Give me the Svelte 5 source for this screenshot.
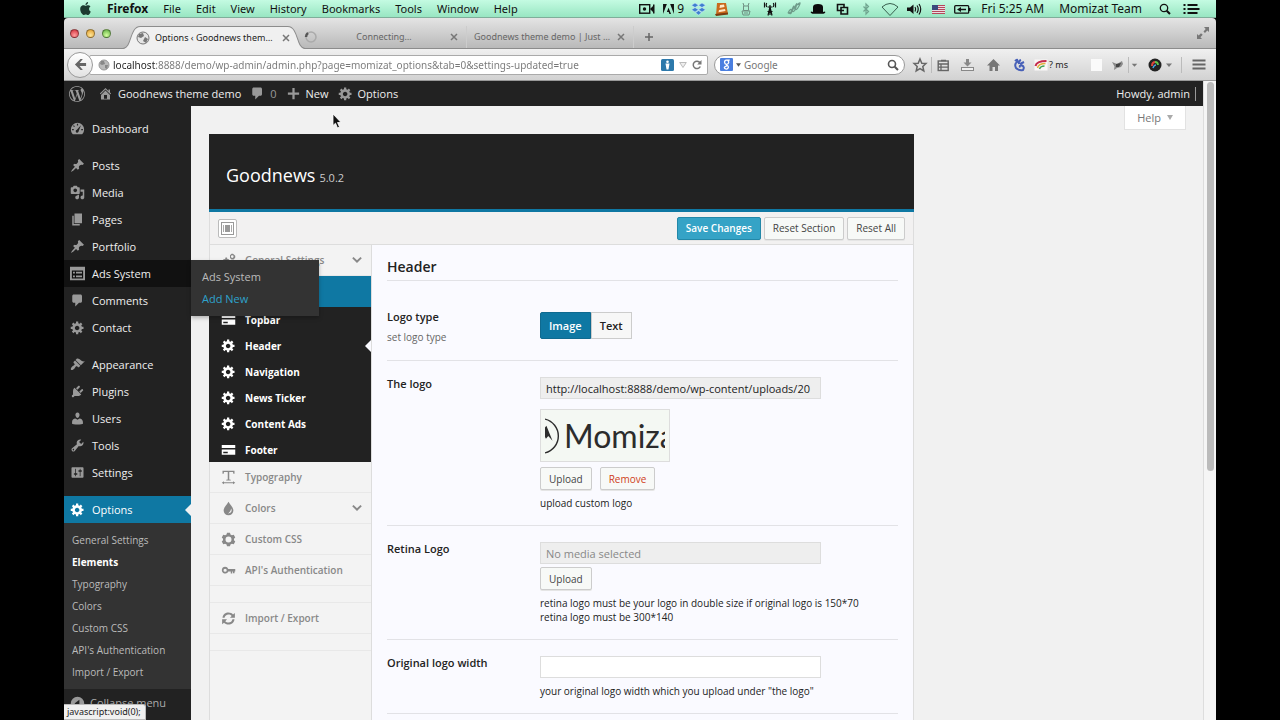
<script>
  const paths = {
    pin: 'M10.44 3.02l1.82-1.82 6.36 6.35-1.83 1.82c-1.05-.68-2.48-.57-3.41.36l-.75.75c-.92.93-1.04 2.35-.35 3.41l-1.83 1.82-2.41-2.41-2.8 2.79c-.42.42-3.38 2.71-3.8 2.29s1.86-3.39 2.28-3.81l2.79-2.79L4.1 9.36l1.83-1.82c1.05.69 2.48.57 3.4-.36l.75-.75c.93-.92 1.05-2.35.36-3.41z',
    media: 'M13 11V4c0-.55-.45-1-1-1h-1.67L9 1H5L3.67 3H2c-.55 0-1 .45-1 1v7c0 .55.45 1 1 1h10c.55 0 1-.45 1-1zM7 4.5c1.38 0 2.5 1.12 2.5 2.5S8.38 9.5 7 9.5 4.5 8.38 4.5 7 5.62 4.5 7 4.5zM14 6h5v10.5c0 1.38-1.12 2.5-2.5 2.5S14 17.88 14 16.5s1.12-2.5 2.5-2.5c.17 0 .34.02.5.05V9h-3V6zm-4 8.05V13h2v3.5c0 1.38-1.12 2.5-2.5 2.5S7 17.88 7 16.5 8.12 14 9.5 14c.17 0 .34.02.5.05z',
    page: 'M6 15V2h10v13H6zm-1 1h8v2H3V5h2v11z',
    comment: 'M5 2h9c1.1 0 2 .9 2 2v7c0 1.1-.9 2-2 2h-2l-5 5v-5H5c-1.1 0-2-.9-2-2V4c0-1.1.9-2 2-2z',
    gear: 'M18 12h-2.18c-.17.7-.44 1.35-.81 1.93l1.54 1.54-2.1 2.1-1.54-1.54c-.58.36-1.23.63-1.91.79V19H8v-2.18c-.68-.16-1.33-.43-1.91-.79l-1.54 1.54-2.12-2.12 1.54-1.54c-.36-.58-.63-1.23-.79-1.91H1V9.03h2.17c.16-.7.44-1.35.8-1.94L2.43 5.55l2.1-2.1 1.54 1.54c.58-.37 1.24-.64 1.93-.81V2h3v2.18c.68.16 1.33.43 1.91.79l1.54-1.54 2.12 2.12-1.54 1.54c.36.59.64 1.24.8 1.94H18V12zm-8.5 1.5c1.66 0 3-1.34 3-3s-1.34-3-3-3-3 1.34-3 3 1.34 3 3 3z',
    brush: 'M14.48 11.06L7.41 3.99l1.5-1.5c.5-.56 2.3-.47 3.51.32 1.21.8 1.43 1.28 2.91 2.1 1.18.64 2.45 1.26 4.45.85zm-.71.71L6.7 4.7 4.93 6.47c-.39.39-.39 1.02 0 1.41l1.06 1.06c.39.39.39 1.03 0 1.42-.6.6-1.43 1.11-2.21 1.69-.35.26-.7.53-1.01.84C1.43 14.23.4 16.08 1.4 17.07c.99 1 2.84-.03 4.18-1.36.31-.31.58-.66.85-1.02.57-.78 1.08-1.61 1.69-2.21.39-.39 1.02-.39 1.41 0l1.06 1.06c.39.39 1.02.39 1.41 0z',
    plug: 'M13.11 4.36L9.87 7.6 8 5.73l3.24-3.24c.35-.34 1.05-.2 1.56.32.52.51.66 1.21.31 1.55zm-8 1.77l.91-1.12 9.01 9.01-1.19.84c-.71.71-2.63 1.16-3.82 1.16H6.14L4.9 17.26c-.59.59-1.54.59-2.12 0-.59-.58-.59-1.53 0-2.12l1.24-1.24v-3.88c0-1.13.4-3.19 1.09-3.89zm7.26 3.97l3.24-3.24c.34-.35 1.04-.21 1.55.31.52.51.66 1.21.31 1.55l-3.24 3.25z',
    user: 'M10 9.25c-2.27 0-2.73-3.44-2.73-3.44C7 4.02 7.82 2 9.97 2c2.16 0 2.98 2.02 2.71 3.81 0 0-.41 3.44-2.68 3.44zm0 2.57L12.72 10c2.39 0 4.52 2.33 4.52 4.53v2.49s-3.65 1.13-7.24 1.13c-3.65 0-7.24-1.13-7.24-1.13v-2.49c0-2.25 1.94-4.48 4.47-4.48z',
    wrench: 'M16.68 9.77c-1.34 1.34-3.3 1.67-4.95.99l-5.41 6.52c-.99.99-2.59.99-3.58 0s-.99-2.59 0-3.57l6.52-5.42c-.68-1.65-.35-3.61.99-4.95 1.28-1.28 3.12-1.62 4.72-1.06l-2.89 2.89 2.82 2.82 2.86-2.87c.53 1.58.18 3.39-1.08 4.65zM3.81 16.21c.4.39 1.04.39 1.43 0 .4-.4.4-1.04 0-1.43-.39-.4-1.03-.4-1.43 0-.39.39-.39 1.03 0 1.43z',
    sliders: 'M18 16V4c0-.55-.45-1-1-1H3c-.55 0-1 .45-1 1v12c0 .55.45 1 1 1h14c.55 0 1-.45 1-1zM8 11h1c.55 0 1 .45 1 1s-.45 1-1 1H8v1.5c0 .28-.22.5-.5.5s-.5-.22-.5-.5V13H6c-.55 0-1-.45-1-1s.45-1 1-1h1V5.5c0-.28.22-.5.5-.5s.5.22.5.5V11zm5-2h-1c-.55 0-1-.45-1-1s.45-1 1-1h1V5.5c0-.28.22-.5.5-.5s.5.22.5.5V7h1c.55 0 1 .45 1 1s-.45 1-1 1h-1v5.5c0 .28-.22.5-.5.5s-.5-.22-.5-.5V9z',
    home: 'M16 8.5l1.53 1.53-1.06 1.06L10 4.6l-6.47 6.5-1.06-1.07L10 2.5l4 4v-2h2v4zm-6-2.46l6 5.99V18H4v-5.97zM12 17v-5H8v5h4z',
    dash: 'M3.8 17.5C2.200 16 1.200 13.700 1.200 11.200A8.800 8.800 0 0 1 18.800 11.200C18.800 13.700 17.800 16 16.200 17.500ZM9.200 3.800V6H10.800V3.800ZM5 5.600L4 6.600L5.500 8.100L6.500 7.100ZM2.800 10.600V12.200H5V10.600ZM15 10.600V12.200H17.200V10.600ZM14.600 5.800L9.200 11.600A2 2 0 1 0 11.600 13.400Z',
    ads: 'M0 1H20V19H0ZM2.500 6V16.500H17.500V6ZM4 7.500H6.500V10H4ZM8 7.500H16V10H8ZM4 12.500H6.500V15H4ZM8 12.500H16V15H8Z',
    card: 'M1 4H19V8H1ZM1 10H19V17H1ZM3 13V15H9V13Z',
    type: 'M2 1H18V5H16.500L16 2.800H11V12.500L13 13V14H7V13L9 12.500V2.800H4L3.500 5H2ZM1 17L4 15V16.300H16V15L19 17L16 19V17.700H4V19Z',
    drop: 'M10 1C12 5 16.500 8.500 16.500 12.800A6.500 6.300 0 0 1 3.500 12.800C3.500 8.500 8 5 10 1ZM13.500 10C13 13 12 14.500 9.500 16.500C13 16.800 15.500 13.500 13.500 10Z',
    nut: 'M8 1H12L12.600 3.300L14.500 4.300L17 3.800L19 7.200L17.300 9V11L19 12.800L17 16.200L14.500 15.700L12.600 16.700L12 19H8L7.400 16.700L5.500 15.700L3 16.200L1 12.800L2.700 11V9L1 7.200L3 3.800L5.500 4.300L7.400 3.300ZM10 6A4 4 0 1 0 10 14A4 4 0 1 0 10 6Z',
    key: 'M5.500 5A4.500 4.500 0 1 0 9.800 11.200H13V14H15V11.200H16V13.500H18V11.200H19V8H9.700A4.500 4.500 0 0 0 5.500 5ZM5.500 7.500A2 2 0 1 1 5.500 11.800A2 2 0 0 1 5.500 7.500Z',
    sync: 'M2 9C2.500 4.500 6 2 10 2C12.500 2 14.500 3 16 4.500L18.500 2.500V9H12L14.200 6.500C13 5.200 11.700 4.600 10 4.600C7.300 4.600 5.200 6.300 4.700 9ZM18 11C17.500 15.500 14 18 10 18C7.500 18 5.500 17 4 15.500L1.500 17.500V11H8L5.800 13.500C7 14.800 8.300 15.400 10 15.400C12.700 15.400 14.800 13.700 15.300 11Z',
    gears: 'M6 6H8L8.500 8L10.500 8.200L11.500 10L10.500 11.500L11.500 13.500L10 15.500L8.500 15.200L8 17H6L5.500 15.200L3.500 15.500L2 13.500L3 11.500L2 10L3.500 8.200L5.500 8ZM7 9.700A2 2 0 1 0 7 13.700A2 2 0 1 0 7 9.700ZM14 1H16L19 3.500V6L17 8.500H14L12 6.500V3ZM15 3A1.700 1.700 0 1 0 15 6.500A1.700 1.700 0 1 0 15 3Z',
    collapse: 'M10 1A9 9 0 1 0 10 19A9 9 0 1 0 10 1ZM12.500 5V15L6 10Z',
    plus: 'M8.500 2.500H11.500V8.500H17.500V11.500H11.500V17.500H8.500V11.500H2.500V8.500H8.500Z',
    chevron: 'M2 7L4.200 5L10 10.600L15.800 5L18 7L10 15Z'
  };

  const menuGroups = [
    [['Dashboard', 'dash']],
    [['Posts', 'pin'], ['Media', 'media'], ['Pages', 'page'], ['Portfolio', 'pin'], ['Ads System', 'ads'], ['Comments', 'comment'], ['Contact', 'gear']],
    [['Appearance', 'brush'], ['Plugins', 'plug'], ['Users', 'user'], ['Tools', 'wrench'], ['Settings', 'sliders']],
    [['Options', 'gear']]
  ];
  const optionLinks = ['General Settings', 'Elements', 'Typography', 'Colors', 'Custom CSS', "API's Authentication", 'Import / Export'];
  const macMenus = ['File', 'Edit', 'View', 'History', 'Bookmarks', 'Tools', 'Window', 'Help'];
  const elements = [['Topbar', 'card'], ['Header', 'gear'], ['Navigation', 'gear'], ['News Ticker', 'gear'], ['Content Ads', 'gear'], ['Footer', 'card']];
  const sections = [['Typography', 'type'], ['Colors', 'drop'], ['Custom CSS', 'nut'], ["API's Authentication", 'key']];

  let logoType = $state('Image');
  let logoUrl = $state('http://localhost:8888/demo/wp-content/uploads/20');
  let retinaUrl = $state('');
  let logoWidth = $state('');
  let address = $state('localhost:8888/demo/wp-admin/admin.php?page=momizat_options&tab=0&settings-updated=true');
</script>

{#snippet icon(name)}
  <svg class="icon" viewBox="0 0 20 20" aria-hidden="true"><path fill="currentColor" fill-rule="evenodd" d={paths[name]} /></svg>
{/snippet}

<div class="desktop">
  <div class="screen">
    <nav class="menubar" aria-label="Menu bar">
      <svg class="apple" viewBox="0 0 24 24" aria-hidden="true"><path fill="#1d3b30" d="M12.152 6.896c-.948 0-2.415-1.078-3.96-1.04-2.04.027-3.91 1.183-4.961 3.014-2.117 3.675-.546 9.103 1.519 12.09 1.013 1.454 2.208 3.09 3.792 3.039 1.52-.065 2.09-.987 3.935-.987 1.831 0 2.35.987 3.96.948 1.637-.026 2.676-1.48 3.676-2.948 1.156-1.688 1.636-3.325 1.662-3.415-.039-.013-3.182-1.221-3.22-4.857-.026-3.04 2.48-4.494 2.597-4.559-1.429-2.09-3.623-2.324-4.39-2.376-2-.156-3.675 1.09-4.61 1.09zM15.53 3.83c.843-1.012 1.4-2.427 1.245-3.83-1.207.052-2.662.805-3.532 1.818-.78.896-1.454 2.338-1.273 3.714 1.338.104 2.715-.688 3.559-1.701" /></svg>
      <b>Firefox</b>
      {#each macMenus as m}<span class="menu">{m}</span>{/each}
      <div class="status">
        <svg viewBox="0 0 24 16"><rect x="4.700" y="3.700" width="10" height="8.500" fill="none" stroke="#111" stroke-width="1.400" /><circle cx="9.500" cy="8" r="1.700" fill="#111" /><path d="M15 8L19 4V12ZM18 3.500H19.500V12.500H18Z" fill="#111" /></svg>
        <span class="adobe"><svg viewBox="0 0 12 11"><path fill="#111" d="M0 0H4.200L0 11ZM7.800 0H12V11ZM6 4L8.800 11H7L6.200 8.700H4.200Z" /></svg>9</span>
        <svg viewBox="0 0 24 16"><path fill="#3f7fd0" stroke="#d5ecff" stroke-width=".5" d="M9 2L12.500 4.300L9 6.500L5.500 4.300ZM16 2L19.500 4.300L16 6.500L12.500 4.300ZM9 6.500L12.500 8.800L9 11L5.500 8.800ZM16 6.500L19.500 8.800L16 11L12.500 8.800ZM12.500 9.600L15.500 11.800L12.500 14L9.500 11.800Z" /></svg>
        <svg viewBox="0 0 24 16"><path fill="#c96a1c" d="M7 2H16L18 13L6 14.500Z" /><path fill="#ffe8c8" d="M10 4L14 3.500L14.500 6L9.500 7ZM9 9L15 8L15.500 10L8.500 11.200Z" /><path fill="#7a3d10" d="M5 13L18 11.500V13.500L6 15Z" /></svg>
        <svg viewBox="0 0 24 16"><path fill="none" stroke="#6f8f82" d="M9 2L10 5M15 2L14 5M9.500 5H14.500V9.500H9.500ZM8 10H16L15 14H9ZM10 12H14" /></svg>
        <svg viewBox="0 0 24 16"><path fill="none" stroke="#111" stroke-width="1.200" d="M12 4V14M10 14.500L12 6L14 14.500M9.500 6H14.500M9.500 10.500H14.500M8.700 2Q7.500 4 8.700 6M6.500 1.500V6.500M15.300 2Q16.500 4 15.300 6M17.500 1.500V6.500" /></svg>
        <svg viewBox="0 0 24 16"><path fill="none" stroke="#6f9c8a" stroke-width="1.200" d="M6 12Q9 6 9.500 10T6 12Q10 12 11.500 7T9.500 9.500Q12 13 14 6T12.500 7Q14 11 17 5T15 4L17.500 3" /></svg>
        <svg viewBox="0 0 24 16"><path fill="#0b0b0b" d="M7 11V6Q7 3 12 3T17 6V11L19 10.500Q20 12 17.500 12.700H6.500Q4 12 5 10.500Z" /></svg>
        <svg viewBox="0 0 24 16"><path fill="none" stroke="#111" stroke-width="1.600" d="M11 9.500H7.500V3.500H14V7M11 6.500H17.500V13H11ZM11 6.500V9.500H14" /></svg>
        <svg viewBox="0 0 24 16"><path fill="none" stroke="#6fa48f" stroke-width="1.200" d="M9.500 5.500L14.500 10.500L12 13V3L14.500 5.500L9.500 10.500" /></svg>
        <svg viewBox="0 0 24 16"><path fill="none" stroke="#39604f" d="M4 6Q12 -1 20 6L12 14.500Z" /></svg>
        <svg viewBox="0 0 24 16"><path fill="#111" d="M5 6.500H8L11.500 3.500V13L8 10H5Z" /><path fill="none" stroke="#111" stroke-width="1.200" d="M13 6Q14.500 8 13 10.500M15 4.500Q17.500 8 15 12M17 3Q20.500 8 17 13.500" /></svg>
        <svg viewBox="0 0 24 16"><rect x="6" y="4" width="13" height="9" fill="#e8dfe3" /><path stroke="#b5485a" d="M6 4.500H19M6 6.500H19M6 8.500H19M6 10.500H19M6 12.500H19" /><rect x="6" y="4" width="6" height="5" fill="#3b4a7d" /></svg>
        <svg viewBox="0 0 24 16"><rect x="4.700" y="4.700" width="14" height="7.500" rx="1" fill="none" stroke="#111" stroke-width="1.300" /><path fill="#111" d="M19 7H20.500V10H19ZM7 8.500L11 6V7.700H16V9.300H11V11Z" /></svg>
      </div>
      <span>Fri 5:25 AM</span>
      <span>Momizat Team</span>
      <svg class="find" viewBox="0 0 12 12"><circle cx="5" cy="5" r="3.700" fill="none" stroke="#111" stroke-width="1.300" /><path d="M7.700 7.700L11 11" stroke="#111" stroke-width="2" /></svg>
      <svg class="lines" viewBox="0 0 16 12"><path stroke="#111" stroke-width="2" d="M0 2H2M4 2H14M0 6H2M4 6H16M0 10H2M4 10H14" /></svg>
    </nav>

    <div class="tabbar">
      <div class="lights"><i class="red"></i><i class="amber"></i><i class="green"></i></div>
      <div class="tab active">
        <svg class="shape" viewBox="0 0 180 23" preserveAspectRatio="none" aria-hidden="true"><path d="M0 23C9 22 6 1 17 .5H163C174 1 171 22 180 23Z" fill="#f0f0f0" /><path d="M0 22.500C9 22 6 1 17 .5H163C174 1 171 22 180 22.500" fill="none" stroke="#8c8c8c" /></svg>
        <svg class="fav" viewBox="0 0 14 14"><circle cx="7" cy="7" r="6" fill="#e5e5e5" stroke="#777" /><path fill="#777" d="M3 3L7 2L8 5L5 7L2 6ZM9 6L12 8L10 12L7 10Z" /></svg>
        <span>Options ‹ Goodnews them…</span>
        <button aria-label="Close tab"><svg viewBox="0 0 8 8"><path d="M1 1L7 7M7 1L1 7" stroke="#777" stroke-width="1.500" /></svg></button>
      </div>
      <div class="tab">
        <svg class="fav" viewBox="0 0 14 14"><circle cx="7" cy="7" r="5" fill="none" stroke="#aaa" stroke-width="1.500" /><path d="M2 7A5 5 0 0 1 4 3" fill="none" stroke="#555" stroke-width="2.500" /></svg>
        <span class="centered">Connecting…</span>
        <button aria-label="Close tab"><svg viewBox="0 0 8 8"><path d="M1 1L7 7M7 1L1 7" stroke="#777" stroke-width="1.500" /></svg></button>
      </div>
      <div class="tab ruled">
        <span>Goodnews theme demo | Just …</span>
        <button aria-label="Close tab"><svg viewBox="0 0 8 8"><path d="M1 1L7 7M7 1L1 7" stroke="#777" stroke-width="1.500" /></svg></button>
      </div>
      <button class="newtab" aria-label="New tab"><svg viewBox="0 0 10 10"><path d="M5 1V9M1 5H9" stroke="#666" stroke-width="1.500" /></svg></button>
      <svg class="expand" viewBox="0 0 12 12"><path fill="#777" d="M7 0H12V5L10.300 3.500L8 6L6.500 4.500L8.700 2ZM0 7L1.700 8.500L4 6.200L5.700 7.800L3.400 10.200L5 12H0Z" /></svg>
    </div>

    <div class="toolbar">
      <button class="back" aria-label="Back"><svg viewBox="0 0 14 14"><path fill="#666" d="M1 7L7 1H9.500L6 5.300H13V8.700H6L9.500 13H7Z" /></svg></button>
      <div class="url">
        <svg class="globe" viewBox="0 0 12 12"><circle cx="6" cy="6" r="5" fill="#bbb" stroke="#999" /><path fill="#888" d="M3 2L6 2L7 5L4 6L2 5ZM7 6L10 6L9 10L7 9Z" /></svg>
        <input aria-label="Address" bind:value={address} />
        <svg class="badge" viewBox="0 0 13 12"><rect width="13" height="12" rx="1.500" fill="#2d79ab" /><circle cx="6.500" cy="2.700" r="1.300" fill="#fff" /><path fill="#fff" d="M4.500 4.500H8.500L7.500 10.500H5.500Z" /></svg>
        <svg class="mini" viewBox="0 0 8 8"><path d="M.7 1.500H7.300L4 6.500Z" fill="#eee" stroke="#bbb" /></svg>
        <svg class="reload" viewBox="0 0 10 10"><path d="M8.300 6.500A3.700 3.700 0 1 1 8 2.800" fill="none" stroke="#777" stroke-width="1.500" /><path fill="#777" d="M9.500 0V4.500H5.200Z" /></svg>
      </div>
      <div class="search">
        <svg class="g" viewBox="0 0 12 12"><rect width="12" height="12" rx="1" fill="#4a7fe0" /><path d="M9 2H6A1.900 1.900 0 1 0 6.200 5.800A1.900 1.900 0 0 0 7 2.200M5.800 5.800L6.500 6.900A1.900 1.700 0 1 1 4 9Q4.300 7.500 6.500 7.200" fill="none" stroke="#fff" stroke-width="1.200" /></svg>
        <svg class="caret" viewBox="0 0 6 4"><path d="M0 0H6L3 4Z" fill="#555" /></svg>
        <input aria-label="Search" placeholder="Google" />
        <svg class="find" viewBox="0 0 12 12"><circle cx="5" cy="5" r="3.500" fill="none" stroke="#555" stroke-width="1.600" /><path d="M7.700 7.700L11 11" stroke="#555" stroke-width="2" /></svg>
      </div>
      <div class="tools">
        <svg class="star" viewBox="0 0 24 16" preserveAspectRatio="xMidYMid slice"><path d="M12 2L13.800 6.200L18 6.500L14.800 9.500L15.800 14L12 11.600L8.200 14L9.200 9.500L6 6.500L10.200 6.200Z" fill="none" stroke="#666" stroke-width="1.500" /></svg>
        <svg class="boxed" viewBox="0 0 24 16" preserveAspectRatio="xMidYMid slice"><rect x="7.200" y="4" width="10" height="9.500" fill="none" stroke="#666" stroke-width="1.400" /><path d="M10 3.500H15M7 7H17.500M7 10.200H17.500M10 7V13" stroke="#666" stroke-width="1.300" /></svg>
        <svg viewBox="0 0 24 16"><path fill="#888" d="M11 2H14V5.500H16.500L12.500 9.500L8.500 5.500H11Z" /><rect x="6.500" y="10.500" width="12" height="3" fill="#eee" stroke="#888" /></svg>
        <svg viewBox="0 0 24 16"><path fill="#777" d="M12.500 2L19 8.500H17V14H14V10H11.500V14H8.500V8.500H6Z" /></svg>
        <svg viewBox="0 0 24 16"><path fill="none" stroke="#4760b8" stroke-width="2" d="M8 4Q11 1 10 5Q7 7 9 11Q12 14 16 13Q18 10 15 8.500Q12 8 13 10.500M14 3Q11 4 12 7M17 5L13 7" /></svg>
        <svg class="rainbow" viewBox="0 0 16 16"><rect x="2" y="2.500" width="13" height="11" fill="#faf7f7" /><path d="M3 9Q4 4 14 4" fill="none" stroke="#c42b4c" stroke-width="2" /><path d="M5 11Q6 6.500 13 6.500" fill="none" stroke="#e2b13d" stroke-width="1.500" /><path d="M7 12Q8 9 12 9" fill="none" stroke="#44a356" stroke-width="1.500" /></svg>
        <span>? ms</span>
        <svg class="blank" viewBox="0 0 22 16"><rect x="6" y="2" width="11" height="12" fill="#fafafa" /></svg>
        <svg class="bug" viewBox="0 0 21 16"><path fill="#8a8a8a" d="M5 5L10 7L15 4L16 7L14 10L10 11L7 13L7.500 9.500Z" /><path fill="#444" d="M9 7L14 6L12 10L9 10Z" /></svg>
        <svg class="drop ruledl" viewBox="0 0 12 16"><path d="M3 6.500H9L6 10Z" fill="#777" /></svg>
        <svg class="ball" viewBox="0 0 20 16"><circle cx="10" cy="8" r="6.500" fill="#222" /><path d="M7 9Q7 5 10.500 5" fill="none" stroke="#d9453c" stroke-width="2" /><path d="M13 8Q13 5 10 5" fill="none" stroke="#62c44c" stroke-width="1.800" /><path d="M8 11Q9 8 11 8" fill="none" stroke="#48a3e0" stroke-width="1.500" /></svg>
        <svg class="drop narrow" viewBox="2 0 8 16"><path d="M3 6.500H9L6 10Z" fill="#777" /></svg>
        <svg class="burger" viewBox="0 0 34 16"><path d="M10.500 3.500H23.500M10.500 7.500H23.500M10.500 11.500H23.500" stroke="#666" stroke-width="2" /></svg>
      </div>
    </div>

    <div class="viewport">
      <div class="site">
        <header class="adminbar">
          <svg class="wp" viewBox="0 0 24 24" aria-hidden="true"><path fill="#999" d="M21.469 6.825c.84 1.537 1.318 3.3 1.318 5.175 0 3.979-2.156 7.456-5.363 9.325l3.295-9.527c.615-1.54.82-2.771.82-3.864 0-.405-.026-.78-.07-1.11m-7.981.105c.647-.03 1.232-.105 1.232-.105.582-.075.514-.93-.067-.899 0 0-1.755.135-2.88.135-1.064 0-2.85-.15-2.85-.15-.585-.03-.661.855-.075.885 0 0 .54.061 1.125.09l1.68 4.605-2.37 7.08L5.354 6.9c.649-.03 1.234-.1 1.234-.1.585-.075.516-.93-.065-.896 0 0-1.746.138-2.874.138-.2 0-.438-.008-.69-.015C4.911 3.15 8.235 1.215 12 1.215c2.809 0 5.365 1.072 7.286 2.833-.046-.003-.091-.009-.141-.009-1.06 0-1.812.923-1.812 1.914 0 .89.513 1.643 1.06 2.531.411.72.89 1.643.89 2.977 0 .915-.354 1.994-.821 3.479l-1.075 3.585-3.9-11.61.001.014zM12 22.784c-1.059 0-2.081-.153-3.048-.437l3.237-9.406 3.315 9.087c.024.053.05.101.078.149-1.12.393-2.325.609-3.582.609M1.211 12c0-1.564.336-3.05.935-4.39L7.29 21.709C3.694 19.96 1.212 16.271 1.211 12M12 0C5.385 0 0 5.385 0 12s5.385 12 12 12 12-5.385 12-12S18.615 0 12 0" /></svg>
          <a href="#home">{@render icon('home')}Goodnews theme demo</a>
          <a href="#comments" class="count">{@render icon('comment')}0</a>
          <a href="#new">{@render icon('plus')}New</a>
          <a href="#options">{@render icon('gear')}Options</a>
          <span class="howdy">Howdy, admin</span>
        </header>

        <div class="body">
          <aside class="sidebar">
            <ul>
              {#each menuGroups as group}
                {#each group as [label, name], i}
                  <li class:first={i === 0} class:hover={label === 'Ads System'} class:current={label === 'Options'}>
                    <a href="#{name}">{@render icon(name)}{label}</a>
                    {#if label === 'Ads System'}
                      <div class="flyout"><a href="#ads">Ads System</a><a href="#add" class="lit">Add New</a></div>
                    {/if}
                  </li>
                {/each}
              {/each}
            </ul>
            <div class="submenu">
              {#each optionLinks as l}<a href="#sub" class:on={l === 'Elements'}>{l}</a>{/each}
            </div>
            <button class="collapse">{@render icon('collapse')}Collapse menu</button>
          </aside>

          <main>
            <button class="help">Help <svg viewBox="0 0 6 5"><path d="M0 0H6L3 5Z" fill="#aaa" /></svg></button>
            <div class="panel">
              <div class="brand"><h1>Goodnews</h1><small>5.0.2</small></div>
              <div class="actions">
                <button class="layout" aria-label="Toggle layout"><svg viewBox="0 0 13 13"><rect x=".5" y=".5" width="12" height="12" fill="#fff" stroke="#999" /><path d="M2.500 3V10M10.500 3V10" stroke="#aaa" /><rect x="4" y="3" width="5" height="7" fill="#999" /></svg></button>
                <button class="btn primary">Save Changes</button>
                <button class="btn">Reset Section</button>
                <button class="btn">Reset All</button>
              </div>
              <div class="columns">
                <nav class="sections" aria-label="Sections">
                  <a href="#general">{@render icon('gears')}<span>General Settings</span>{@render icon('chevron')}</a>
                  <a href="#elements" class="open" aria-label="Elements"></a>
                  <div class="elements">
                    {#each elements as [label, name]}
                      <a href="#element" class:here={label === 'Header'}>{@render icon(name)}<span>{label}</span></a>
                    {/each}
                  </div>
                  {#each sections as [label, name]}
                    <a href="#section">{@render icon(name)}<span>{label}</span>{#if label === 'Colors'}{@render icon('chevron')}{/if}</a>
                  {/each}
                  <div class="gap"></div>
                  <a href="#import">{@render icon('sync')}<span>Import / Export</span></a>
                  <div class="gap"></div>
                </nav>

                <form class="fields" onsubmit={(e) => e.preventDefault()}>
                  <h2>Header</h2>
                  <div class="row tall">
                    <div><b>Logo type</b><p class="muted">set logo type</p></div>
                    <div class="toggle">
                      {#each ['Image', 'Text'] as t}
                        <button type="button" class:on={logoType === t} onclick={() => (logoType = t)}>{t}</button>
                      {/each}
                    </div>
                  </div>
                  <div class="row">
                    <label for="logo">The logo</label>
                    <div>
                      <input id="logo" class="media" bind:value={logoUrl} />
                      <div class="preview">
                        <div class="mark">
                          <svg viewBox="0 0 16 38" aria-hidden="true"><path d="M0 1A18.500 18.500 0 0 1 0 37" fill="none" stroke="#2c2c2c" stroke-width="1.500" /><path d="M0 20V10L1.500 8L8 24L3.500 19L1 22Z" fill="#2c2c2c" /></svg>
                          <span>Momiza</span>
                        </div>
                      </div>
                      <div class="buttons"><button type="button" class="btn">Upload</button><button type="button" class="btn danger">Remove</button></div>
                      <p>upload custom logo</p>
                    </div>
                  </div>
                  <div class="row">
                    <label for="retina">Retina Logo</label>
                    <div>
                      <input id="retina" class="media" placeholder="No media selected" bind:value={retinaUrl} />
                      <div class="buttons near"><button type="button" class="btn">Upload</button></div>
                      <p>retina logo must be your logo in double size if original logo is 150*70<br />retina logo must be 300*140</p>
                    </div>
                  </div>
                  <div class="row">
                    <label for="width">Original logo width</label>
                    <div>
                      <input id="width" bind:value={logoWidth} />
                      <p>your original logo width which you upload under "the logo"</p>
                    </div>
                  </div>
                </form>
              </div>
            </div>
          </main>
        </div>
      </div>
      <div class="scrollbar"><div class="thumb"></div></div>
      <div class="linkstatus">javascript:void(0);</div>
    </div>
    <svg class="pointer" viewBox="0 0 10 16" aria-hidden="true"><path d="M1 1V12.500L3.500 10.200L5.500 15L7.500 14L5.500 9.500H9Z" fill="#111" stroke="#fff" stroke-width=".8" /></svg>
  </div>
</div>

<style>
  :global(body) { background: #000; }
  * { box-sizing: border-box; }
  .desktop { height: 100vh; overflow: hidden; padding: 0 5%; background: #000; font: 10px/14px "Open Sans", "Noto Sans", sans-serif; color: #222; }
  .screen { position: relative; height: 100%; display: flex; flex-direction: column; }
  button, input { font: inherit; color: inherit; }
  button { margin: 0; padding: 0; border: 0; background: none; }
  a { color: inherit; text-decoration: none; }
  svg { display: block; flex: none; }
  ul { list-style: none; margin: 0; padding: 0; }
  p, h1, h2 { margin: 0; }
  .icon { width: 15px; height: 15px; }

  .menubar { flex: none; height: 18px; display: flex; align-items: center; gap: 15px; padding: 0 16px 0 15px; background: linear-gradient(#c4fbe2, #98e6c2); border-bottom: 1px solid #7fae9a; font: 12px/16px "Noto Sans", sans-serif; color: #111; white-space: nowrap; }
  .menu { font-size: 11px; }
  .apple { width: 13px; height: 13px; }
  .status { margin-left: auto; display: flex; align-items: center; margin-right: -8px; }
  .status > svg { width: 24px; height: 16px; }
  .adobe { display: flex; align-items: center; gap: 3px; width: 27px; padding-left: 4px; }
  .adobe svg { width: 11px; height: 10px; }
  .find { width: 12px; height: 12px; }
  .menubar .find { margin: 0 -3px 0 2px; }
  .lines { width: 17px; height: 12px; }

  .tabbar { flex: none; height: 31px; display: flex; align-items: flex-end; background: linear-gradient(#e4e4e4, #b9b9b9); border-bottom: 1px solid #8c8c8c; font: 9px/14px "Noto Sans", sans-serif; color: #666; white-space: nowrap; border-radius: 4px 4px 0 0; }
  .lights { display: flex; gap: 7px; width: 66px; padding: 0 0 10px 6px; }
  .lights i { width: 9px; height: 9px; border-radius: 50%; border: 1px solid #0006; }
  .red { background: radial-gradient(circle at 50% 75%, #ff9d9d, #d02a36); }
  .amber { background: radial-gradient(circle at 50% 75%, #ffe79a, #e09a26); }
  .green { background: radial-gradient(circle at 50% 75%, #d5ff9f, #5aab3d); }
  .tab { position: relative; width: 168px; height: 22px; display: flex; align-items: center; gap: 5px; padding: 0 8px 0 6px; }
  .tab span { position: relative; flex: 1; }
  .tab button { position: relative; }
  .tab button svg { width: 8px; height: 8px; }
  .tab.active { color: #222; margin-bottom: -1px; height: 23px; }
  .tab .centered { text-align: center; }
  .tab.ruled { border-left: 1px solid #ccc; border-right: 1px solid #ccc; padding-left: 7px; }
  .shape { position: absolute; left: -7px; top: 0; width: 182px; height: 23px; }
  .fav { position: relative; width: 14px; height: 14px; }
  .newtab { padding: 0 0 6px 10px; }
  .newtab svg { width: 10px; height: 10px; }
  .expand { width: 12px; height: 12px; margin: 0 7px 9px auto; }

  .toolbar { flex: none; height: 32px; display: flex; align-items: center; padding-left: 3px; background: linear-gradient(#f0f0f0, #d2d2d2); border-bottom: 1px solid #999; color: #777; font: 11px/14px "Noto Sans", sans-serif; }
  .back { z-index: 1; flex: none; width: 26px; height: 26px; border: 1px solid #999; border-radius: 50%; background: linear-gradient(#fff, #e2e2e2); display: grid; place-items: center; }
  .back svg { width: 13px; height: 13px; }
  .url { flex: 1; height: 20px; margin-left: -4px; display: flex; align-items: center; gap: 5px; padding: 0 5px 0 8px; background: #fff; border: 1px solid #aaa; border-radius: 2px; font-size: 10px; }
  .url input { flex: 1; min-width: 0; padding: 0; border: 0; background: linear-gradient(90deg, #222 43px, #777 43px); background-clip: text; color: transparent; }
  .globe { width: 12px; height: 12px; }
  .url .globe { margin-right: -2px; }
  .badge { width: 13px; height: 12px; }
  .mini { width: 8px; height: 8px; }
  .reload { width: 10px; height: 10px; }
  .search { width: 191px; height: 20px; margin-left: 6px; display: flex; align-items: center; gap: 3px; padding: 0 5px; background: #fff; border: 1px solid #999; border-radius: 10px; }
  .search input { flex: 1; min-width: 0; padding: 0; border: 0; background: none; font-size: 10px; }
  .search input::placeholder { color: #777; }
  .g { width: 13px; height: 13px; }
  .caret { width: 5px; height: 4px; }
  .tools { flex: none; display: flex; align-items: center; color: #222; font-size: 9px; padding-left: 4px; }
  .tools > svg { width: 26px; height: 16px; }
  .tools > .star { width: 22px; }
  .tools > .boxed { width: 23px; }
  .tools > .rainbow { width: 17px; }
  .tools span { width: 36px; white-space: nowrap; }
  .tools > .blank { width: 22px; }
  .tools > .bug { width: 21px; }
  .tools > .drop { width: 12px; }
  .tools > .narrow { width: 8px; }
  .tools > .ball { width: 20px; margin-left: 5px; }
  .tools > .burger { width: 35px; border-left: 1px solid #bbb; margin-left: 8px; }
  .tools > .boxed, .tools > .ruledl { border-left: 1px solid #bbb; }

  .viewport { position: relative; flex: 1; min-height: 0; display: flex; overflow: hidden; }
  .site { flex: 1; min-width: 0; display: flex; flex-direction: column; }
  .adminbar { flex: none; height: 25px; display: flex; align-items: center; gap: 9px; padding: 0 7px 0 5px; background: #222; color: #eee; font-size: 11px; white-space: nowrap; }
  .adminbar a { display: flex; align-items: center; gap: 5px; }
  .adminbar .icon { color: #999; }
  .wp { width: 16px; height: 16px; margin-right: 4px; }
  .adminbar .count { color: #999; }
  .howdy { margin-left: auto; padding-right: 5px; border-right: 1px solid #999; }
  .body { flex: 1; display: flex; }

  .sidebar { flex: none; width: 127px; background: #222; color: #eee; font-size: 11px; padding-top: 9px; }
  .sidebar li { position: relative; }
  .sidebar li.first:not(:first-child) { margin-top: 10px; }
  .sidebar li > a { display: flex; align-items: center; gap: 7px; height: 27px; padding-left: 6px; white-space: nowrap; }
  .sidebar .icon { color: #999; }
  .sidebar .hover > a { background: #111; }
  .sidebar .current > a { background: #0f78a3; color: #fff; }
  .sidebar .current .icon { color: #fff; }
  .sidebar .current::after, .here::after { content: ""; position: absolute; right: 0; top: 50%; margin-top: -6px; border: 6px solid transparent; border-left: 0; border-right-color: #f1f1f1; }
  .flyout { position: absolute; z-index: 3; left: 100%; top: 0; width: 128px; padding: 6px 11px; background: #333; color: #bbb; line-height: 22px; box-shadow: 0 2px 4px #0004; }
  .flyout a { display: block; }
  .flyout .lit { color: #2ea2cc; }
  .submenu { padding: 6px 8px; background: #333; color: #bbb; font-size: 10px; line-height: 22px; white-space: nowrap; }
  .submenu a { display: block; }
  .submenu .on { color: #fff; font-weight: 700; }
  .collapse { display: flex; align-items: center; gap: 5px; height: 32px; padding: 0 6px 4px; color: #aaa; font-size: 11px; }

  main { flex: 1; min-width: 0; display: flex; flex-direction: column; background: #f1f1f1; padding-left: 18px; }
  .help { align-self: flex-end; display: flex; align-items: center; gap: 6px; height: 24px; margin-right: 17px; padding: 0 12px; background: #fff; border: 1px solid #e2e2e2; border-top: 0; color: #777; font-size: 11px; }
  .help svg { width: 6px; height: 5px; }
  .panel { flex: 1; display: flex; flex-direction: column; width: 100%; max-width: 705px; margin-top: 4px; border: 1px solid #ddd; border-top: 0; background: #f3f3f3; }
  .brand { display: flex; align-items: baseline; gap: 4px; height: 78px; margin: 0 -1px; padding: 27px 17px 0; background: #222; border-bottom: 3px solid #0f78a3; color: #fff; }
  .brand h1 { font-size: 18px; line-height: 28px; font-weight: 400; }
  .brand small { font-size: 11px; color: #ccc; }
  .actions { display: flex; align-items: center; gap: 3px; height: 33px; padding: 0 8px; background: #f2f1f1; border-bottom: 1px solid #ddd; }
  .layout { width: 19px; height: 19px; margin-right: auto; display: grid; place-items: center; border: 1px solid #bbb; border-radius: 2px; background: #fff; }
  .layout svg { width: 13px; height: 13px; }
  .btn { height: 23px; padding: 0 8px; border: 1px solid #ccc; border-radius: 2px; background: #f7f9f7; color: #444; box-shadow: 0 1px 0 #e5e5e5; white-space: nowrap; }
  .primary { background: #35a3c6; border-color: #2388a8; color: #fff; font-weight: 600; }
  .danger { color: #d04020; }
  .columns { flex: 1; display: flex; }
  .sections { flex: none; width: 161px; color: #888; font-weight: 600; }
  .sections a { display: flex; align-items: center; gap: 9px; height: 31px; padding: 0 8px 0 11px; border-bottom: 1px solid #e8e8e8; white-space: nowrap; }
  .sections a span { flex: 1; }
  .sections a span + .icon { width: 12px; height: 12px; }
  .sections .open { margin-left: -1px; background: #0f78a3; border: 0; }
  .elements { display: flex; flex-direction: column; gap: 1px; margin-left: -1px; background: #222; color: #fff; font-weight: 700; }
  .sections .elements a { position: relative; height: 25px; padding-left: 12px; border: 0; }
  .sections .here::after { border-right-color: #fafaff; }
  .gap { height: 17px; border-bottom: 1px solid #e8e8e8; }
  .fields { flex: 1; min-width: 0; padding: 0 15px 16px; background: #fafaff; border-left: 1px solid #ddd; }
  .fields h2 { padding: 13px 0 4px; border-bottom: 1px solid #e2e2e6; font-size: 14px; line-height: 18px; font-weight: 600; }
  .row { display: grid; grid-template-columns: 153px 1fr; padding: 16px 0 15px; border-bottom: 1px solid #e2e2e6; }
  .row.tall { padding: 29px 0 16px; }
  .row label, .row b { font-size: 11px; font-weight: 600; }
  .row p { margin-top: 6px; }
  .row .muted { color: #666; }
  .row input { display: block; width: 100%; max-width: 281px; height: 22px; padding: 0 5px; border: 1px solid #ddd; background: #fff; }
  .row .media { background: #eee; font-size: 11px; }
  .row .media::placeholder { color: #888; }
  .toggle { display: flex; margin-top: 2px; height: 27px; font-size: 11px; font-weight: 600; }
  .toggle button { padding: 0 8px; border: 1px solid #ccc; background: #f7f7f7; }
  .toggle .on { background: #0f78a3; border-color: #0f6a90; color: #fff; border-radius: 2px 0 0 2px; }
  .preview { width: 130px; height: 53px; margin: 10px 0 5px; padding: 0 4px; border: 1px solid #ddd; background: #f4f8f3; }
  .mark { display: flex; align-items: center; gap: 4px; height: 51px; overflow: hidden; }
  .mark svg { width: 15px; height: 38px; }
  .mark span { font: 32px/52px Lato, sans-serif; color: #2c2c2c; }
  .buttons { display: flex; gap: 8px; }
  .near { margin-top: 3px; }

  .scrollbar { flex: none; width: 13px; padding: 1px 3px; background: #f5f5f5; border-left: 1px solid #ddd; }
  .thumb { height: 61%; width: 7px; border-radius: 4px; background: #bbb; }
  .linkstatus { position: absolute; left: 0; bottom: 0; padding: 0 4px 0 3px; background: #f0f0f0; border: 1px solid #bbb; border-left: 0; border-radius: 0 3px 0 0; font: 9px/14px "Noto Sans", sans-serif; }
  .pointer { position: absolute; left: 268px; top: 113px; width: 10px; height: 16px; }
</style>
